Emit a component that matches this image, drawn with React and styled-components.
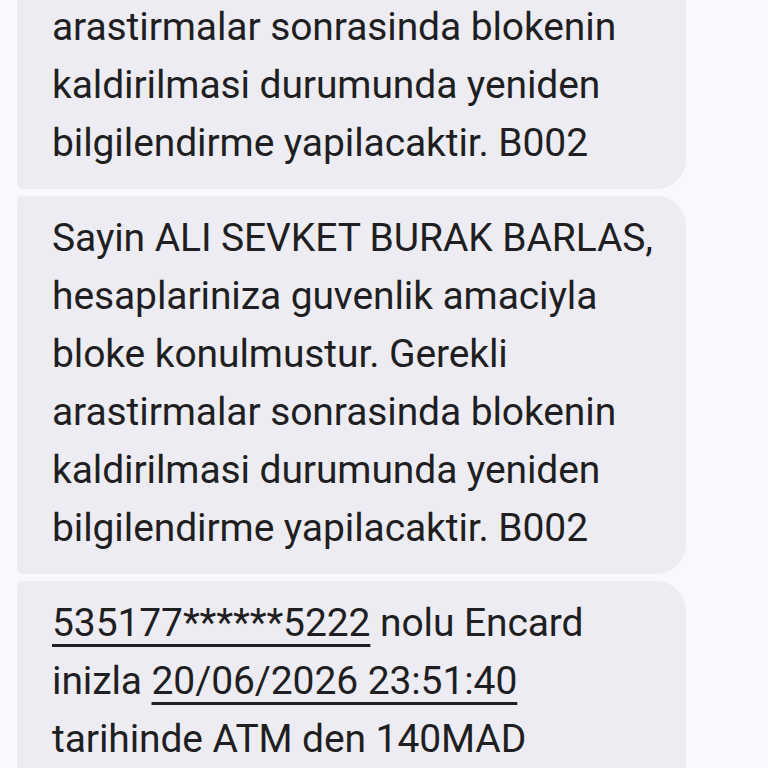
import React from "react";
import styled, { createGlobalStyle } from "styled-components";

const Global = createGlobalStyle`
  html, body { margin: 0; padding: 0; background: #f9f8fd; }
  body { width: 768px; height: 768px; overflow: hidden; }
`;

const Screen = styled.div`
  width: 768px;
  height: 768px;
  overflow: hidden;
  background: #f9f8fd;
`;

const Thread = styled.div`
  display: flex;
  flex-direction: column;
  gap: 7px;
  padding: 0 82px 0 17px;
  margin-top: -189px;
`;

const Bubble = styled.div`
  background: #edecf2;
  border-radius: 5px 30px 30px 5px;
  padding: 13px 20px 17px 35px;
  font-family: Roboto, "Noto Sans", sans-serif;
  font-size: 39px;
  letter-spacing: -0.1px;
  line-height: 58px;
  color: #1f1f22;
`;

const Line = styled.div`
  white-space: nowrap;
`;

const Link = styled.span`
  text-decoration: underline;
  text-decoration-thickness: 3px;
  text-underline-offset: 8px;
`;

const blockMsg = [
  "Sayin ALI SEVKET BURAK BARLAS,",
  "hesaplariniza guvenlik amaciyla",
  "bloke konulmustur. Gerekli",
  "arastirmalar sonrasinda blokenin",
  "kaldirilmasi durumunda yeniden",
  "bilgilendirme yapilacaktir. B002",
];

export default function App() {
  return (
    <Screen>
      <Global />
      <Thread>
        {[0, 1].map((k) => (
          <Bubble key={k}>
            {blockMsg.map((l) => (
              <Line key={l}>{l}</Line>
            ))}
          </Bubble>
        ))}
        <Bubble>
          <Line>
            <Link>535177******5222</Link> nolu Encard
          </Line>
          <Line>
            inizla <Link>20/06/2026 23:51:40</Link>
          </Line>
          <Line>tarihinde ATM den 140MAD</Line>
          <Line>cekilmistir.</Line>
        </Bubble>
      </Thread>
    </Screen>
  );
}
